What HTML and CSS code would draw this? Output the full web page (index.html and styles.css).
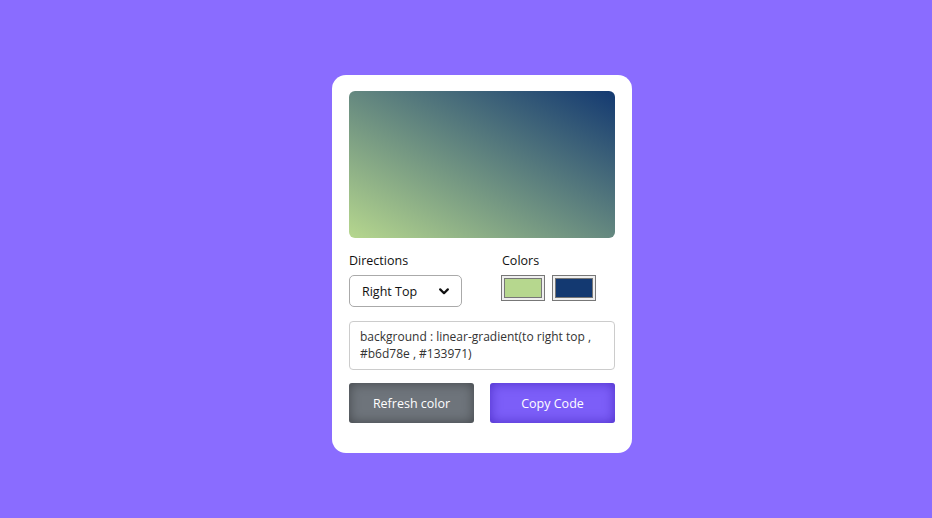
FILE: index.html
```html
<!DOCTYPE html>
<html lang="en">
<head>
<meta charset="utf-8">
<title>Gradient Generator</title>
<link rel="stylesheet" href="styles.css">
</head>
<body>
<main class="wrapper">
  <div class="gradient-box"></div>
  <div class="row options">
    <div class="column direction">
      <p class="label">Directions</p>
      <div class="select-box">
        <select class="select">
          <option>Top</option>
          <option selected>Right Top</option>
        </select>
        <svg class="chevron" width="10" height="7" viewBox="0 0 10 7" aria-hidden="true"><path d="M1.2 1.4 L5 5.2 L8.8 1.4" fill="none" stroke="#111" stroke-width="2.2" stroke-linecap="round" stroke-linejoin="round"/></svg>
      </div>
    </div>
    <div class="column palette">
      <p class="label">Colors</p>
      <div class="colors">
        <input type="color" class="color" value="#b6d78e">
        <input type="color" class="color" value="#133971">
      </div>
    </div>
  </div>
  <textarea class="code" readonly>background : linear-gradient(to right top , #b6d78e , #133971)</textarea>
  <div class="row buttons">
    <button class="btn refresh">Refresh color</button>
    <button class="btn copy">Copy Code</button>
  </div>
</main>
</body>
</html>
```
FILE: styles.css
```css
* { box-sizing: border-box; margin: 0; padding: 0; }
body {
  background: #8a6cff;
  font-family: "Open Sans", "Liberation Sans", sans-serif;
  height: 100vh;
  padding: 10px 0 0 32px;
  display: flex;
  align-items: center;
  justify-content: center;
}
.wrapper {
  width: 300px;
  background: #fff;
  border-radius: 14px;
  padding: 16px 17px 30px;
}
.gradient-box {
  height: 147px;
  border-radius: 6px;
  background: linear-gradient(to right top, #b6d78e, #133971);
}
.row { display: flex; }
.options { margin-top: 14px; }
.column { display: flex; flex-direction: column; }
.direction { width: 153px; }
.label { font-size: 12.5px; color: #111; height: 17px; line-height: 17px; margin-bottom: 6px; }
.select-box { position: relative; width: 113px; height: 32px; }
.select {
  -webkit-appearance: none;
  appearance: none;
  width: 113px;
  height: 32px;
  border: 1px solid #aaa;
  border-radius: 5px;
  font-family: inherit;
  font-size: 12.5px;
  padding: 0 12px;
  background: #fff;
  color: #111;
  outline: none;
}
.chevron { position: absolute; left: 90px; top: 13px; pointer-events: none; }
.colors { display: flex; gap: 7px; margin-left: -1px; }
.color {
  width: 44px;
  height: 26px;
  border: 1px solid #777;
  background: #efefef;
  padding: 0;
}
.color::-webkit-color-swatch-wrapper { padding: 2px; }
.color::-webkit-color-swatch { border: 1px solid #777; }
.code {
  display: block;
  margin-top: 14px;
  width: 100%;
  height: 49px;
  border: 1px solid #ccc;
  border-radius: 4px;
  resize: none;
  font-family: inherit;
  font-size: 12px;
  line-height: 17px;
  padding: 6px 10px;
  color: #333;
  outline: none;
}
.buttons { margin-top: 13px; justify-content: space-between; }
.btn {
  width: 125px;
  height: 40px;
  border: none;
  border-radius: 3px;
  font-family: inherit;
  font-size: 12.5px;
  font-weight: 500;
  color: #fff;
}
.refresh { background: #6e747b; box-shadow: inset 0 0 12px rgba(0,0,0,0.4); }
.copy { background: #7c5ef8; box-shadow: inset 0 0 12px rgba(40,10,160,0.55); }
```
